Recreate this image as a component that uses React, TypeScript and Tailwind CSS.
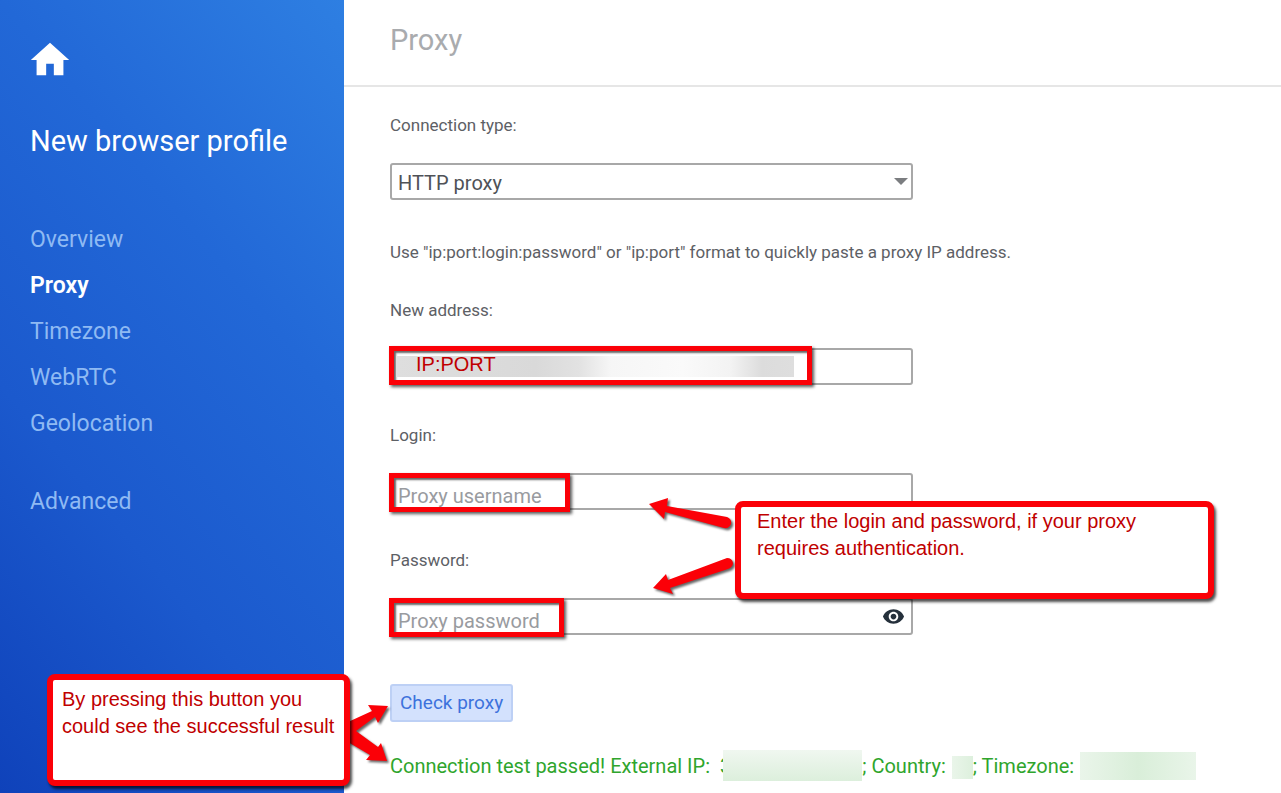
import { useState } from 'react';
import type { ReactNode } from 'react';
import { MdHome, MdVisibility } from 'react-icons/md';

const NAV_ITEMS = ['Overview', 'Proxy', 'Timezone', 'WebRTC', 'Geolocation'];

const FIELD_CLASS =
  'block h-[37px] w-full rounded-[3px] border-2 border-[#a8a8a8] bg-white px-1.5 text-[20px] text-[#4f5257] placeholder:text-[#999b9f] outline-none';

function Field({ id, label, children }: { id: string; label: string; children: ReactNode }) {
  return (
    <div>
      <label htmlFor={id} className="block text-[17px] leading-6">{label}</label>
      <div className="relative mt-[26px] max-w-[523px]">{children}</div>
    </div>
  );
}

// Red frame drawn over the part of a field to fill in
function Highlight({ className, children }: { className: string; children?: ReactNode }) {
  return (
    <div className={`pointer-events-none absolute -left-px h-[39px] border-[5px] border-[#fb0007] shadow-[2px_2px_3px_rgba(0,0,0,0.65),inset_2px_2px_2px_rgba(0,0,0,0.6)] ${className}`}>
      {children}
    </div>
  );
}

function Callout({ className, children }: { className: string; children: ReactNode }) {
  return (
    <div className={`absolute rounded-lg border-[6px] border-[#fb0007] bg-white font-['Liberation_Sans',sans-serif] text-[20px] leading-[27px] text-[#c00000] shadow-[2px_3px_3px_rgba(0,0,0,0.7)] ${className}`}>
      {children}
    </div>
  );
}

export default function App() {
  const [active, setActive] = useState('Proxy');
  const [type, setType] = useState('HTTP proxy');
  const [visible, setVisible] = useState(false);

  return (
    <div className="relative flex min-h-screen bg-white font-[Roboto,sans-serif] text-[#5d6065]">
      <aside className="w-[344px] shrink-0 bg-[linear-gradient(50deg,#0f42ba,#1b59cd_34%,#2268d7_66%,#2e7fe2)] px-[30px] text-white">
        <a href="#home" aria-label="Home" className="-ml-[3px] mt-[37px] block w-[46px]">
          <MdHome size={46} />
        </a>
        <h1 className="mt-10 text-[29px] leading-9">New browser profile</h1>
        <nav className="mt-[65px] flex flex-col gap-[14px] text-[23px] leading-8">
          {NAV_ITEMS.map((item) => (
            <a
              key={item}
              href={`#${item.toLowerCase()}`}
              onClick={() => setActive(item)}
              className={item === active ? 'font-semibold text-white' : 'text-[#8fbaf3]'}
            >
              {item}
            </a>
          ))}
          <a href="#advanced" className="mt-8 text-[#8fbaf3]">Advanced</a>
        </nav>
      </aside>

      <main className="min-w-0 flex-1">
        <header className="flex h-[87px] items-center border-b-2 border-[#e6e6e6] px-[46px] pb-1.5">
          <h2 className="text-[29px] leading-9 text-[#a9abae]">Proxy</h2>
        </header>

        <form className="px-[46px] pt-[26px]" onSubmit={(e) => e.preventDefault()}>
          <Field id="type" label="Connection type:">
            <select
              id="type"
              value={type}
              onChange={(e) => setType(e.target.value)}
              className={`${FIELD_CLASS} appearance-none pt-0.5`}
            >
              <option>HTTP proxy</option>
              <option>SOCKS5 proxy</option>
            </select>
            <svg className="pointer-events-none absolute right-[5px] top-[15px] h-[7px] w-[14px]" viewBox="0 0 14 7">
              <path d="M0 0h14L7 7z" fill="#7b7d80" />
            </svg>
          </Field>

          <p className="mb-[34px] mt-10 text-[17px] leading-6">
            Use "ip:port:login:password" or "ip:port" format to quickly paste a proxy IP address.
          </p>

          <div className="flex flex-col gap-[38px]">
            <Field id="address" label="New address:">
              <input id="address" type="text" className={FIELD_CLASS} />
              <Highlight className="-top-0.5 w-[423px]">
                <div className="ml-0.5 mr-[13px] mt-[5px] h-[21px] bg-[linear-gradient(90deg,#dedede,#d9d9d9_35%,#e2e2e2_46%,#f6f6f6_54%,#fafafa_72%,#f3f3f3_84%,#dcdcdc_92%,#dedede)] pl-5 font-['Liberation_Sans',sans-serif] text-[20px] leading-4 text-[#c00000]">
                  IP:PORT
                </div>
              </Highlight>
            </Field>

            <Field id="login" label="Login:">
              <input id="login" type="text" placeholder="Proxy username" className={`${FIELD_CLASS} pt-2`} />
              <Highlight className="top-0 w-[181px]" />
            </Field>

            <Field id="password" label="Password:">
              <input
                id="password"
                type={visible ? 'text' : 'password'}
                placeholder="Proxy password"
                className={`${FIELD_CLASS} pt-2`}
              />
              <button
                type="button"
                aria-label="Show password"
                onClick={() => setVisible(!visible)}
                className="absolute inset-y-0 right-2 flex items-center text-[#25303b]"
              >
                <MdVisibility size={23} />
              </button>
              <Highlight className="top-0 w-[175px]" />
            </Field>
          </div>

          <button
            type="submit"
            className="mt-[49px] block h-[38px] rounded-[3px] border-2 border-[#bdd0f5] bg-[#d3e1fd] px-2 text-[19px] text-[#3d72dc]"
          >
            Check proxy
          </button>

          <p className="mt-7 flex items-center whitespace-nowrap text-[20px] leading-7 text-[#2fa52c]">
            <span>Connection test passed! External IP:</span>
            <span className="-mr-2 ml-2.5">3</span>
            <span className="relative h-[31px] w-[139px] bg-linear-to-b from-[#f0f7f0] to-[#dcefdc]" />
            <span>; Country:</span>
            <span className="ml-1.5 mt-1 h-[23px] w-[21px] bg-linear-to-r from-[#eaf5ea] to-[#ddf0dd]" />
            <span>; Timezone:</span>
            <span className="ml-1.5 h-7 w-[116px] bg-linear-to-r from-[#eaf5ea] via-[#d9eed9] to-[#e9f5e9]" />
          </p>
        </form>
      </main>

      {/* Help notes over the form */}
      <svg
        className="pointer-events-none absolute left-0 top-0 drop-shadow-[2px_2px_1px_rgba(0,0,0,0.6)]"
        width="760"
        height="793"
        viewBox="0 0 760 793"
        fill="#fb0007"
        aria-hidden="true"
      >
        <path d="M649 504 668 498 667 506 727 517Q732 519 731 524 729 529 724 528L665 512 664 519Z" />
        <path d="M653 588 666 574 668 580 727 558Q732 558 733 563 733 567 728 569L670 588 673 594Z" />
        <path d="M348 722 372 711 368 705 388 706 378 723 375 717 356 731 378 747 381 743 387 761 366 760 370 755 348 742Z" />
      </svg>
      <Callout className="left-[735px] top-[501px] h-[98px] w-[479px] px-4 py-px">
        Enter the login and password, if your proxy
        <br />
        requires authentication.
      </Callout>
      <Callout className="left-[47px] top-[674px] h-[112px] w-[303px] whitespace-nowrap px-[9px] py-1.5">
        By pressing this button you
        <br />
        could see the successful result
      </Callout>
    </div>
  );
}
